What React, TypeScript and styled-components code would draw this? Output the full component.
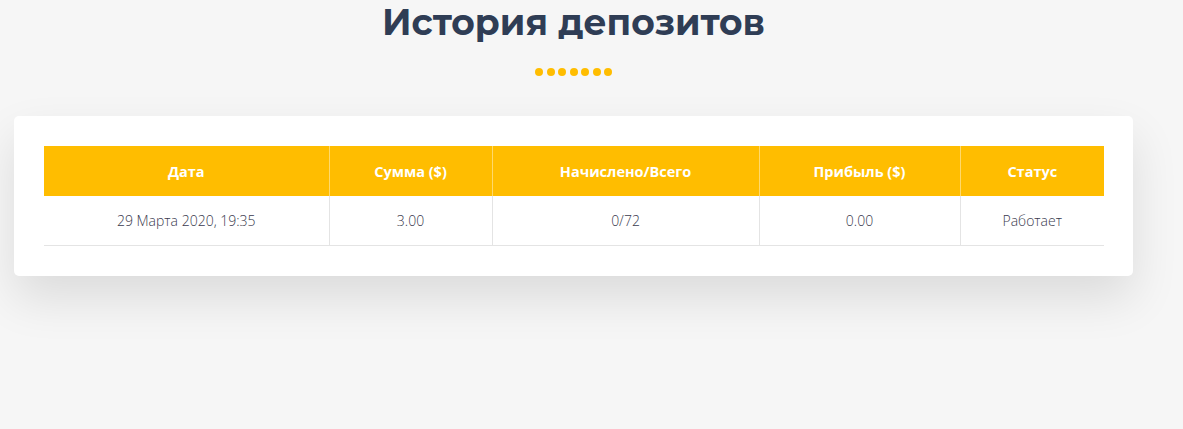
import React from "react";
import styled, { createGlobalStyle } from "styled-components";

const GlobalStyle = createGlobalStyle`
    html, body {
        margin: 0;
        padding: 0;
        background: #f6f6f6;
        font-family: "Open Sans", "Liberation Sans", sans-serif;
    }
`;

const columns = [
    { title: "Дата", width: 285 },
    { title: "Сумма ($)", width: 163 },
    { title: "Начислено/Всего", width: 267 },
    { title: "Прибыль ($)", width: 201 },
    { title: "Статус", width: 144 },
];

const rows = [
    ["29 Марта 2020, 19:35", "3.00", "0/72", "0.00", "Работает"],
];

export default function App() {
    return (
        <>
            <GlobalStyle />
            <Page>
                <Heading>История депозитов</Heading>
                <Dots>
                    {Array.from({ length: 7 }).map((_, i) => <Dot key={i} />)}
                </Dots>
                <Card>
                    <Table>
                        <colgroup>
                            {columns.map(c => <col key={c.title} style={{ width: c.width }} />)}
                        </colgroup>
                        <thead>
                            <tr>
                                {columns.map(c => <Th key={c.title}>{c.title}</Th>)}
                            </tr>
                        </thead>
                        <tbody>
                            {rows.map((r, i) => (
                                <tr key={i}>
                                    {r.map((v, j) => <Td key={j}>{v}</Td>)}
                                </tr>
                            ))}
                        </tbody>
                    </Table>
                </Card>
            </Page>
        </>
    );
}

const Page = styled.div`
    min-height: 429px;
    box-sizing: border-box;
    width: 1119px;
    margin-left: 14px;
    display: flex;
    flex-direction: column;
    align-items: center;
`;

const Heading = styled.h1`
    margin: 0;
    font-family: "Montserrat", "Open Sans", sans-serif;
    font-weight: 700;
    font-size: 36px;
    line-height: 44px;
    color: #2f3d55;
`;

const Dots = styled.div`
    display: flex;
    gap: 3.5px;
    margin-top: 24px;
    height: 8px;
`;

const Dot = styled.span`
    width: 8px;
    height: 8px;
    border-radius: 50%;
    background: #ffbd00;
`;

const Card = styled.div`
    align-self: stretch;
    margin-top: 40px;
    background: #fff;
    border-radius: 5px;
    padding: 30px;
    box-shadow: 0 22px 48px rgba(0, 0, 0, 0.11);
`;

const Table = styled.table`
    width: 1060px;
    border-collapse: collapse;
    table-layout: fixed;
`;

const Th = styled.th`
    background: #ffbd00;
    color: #fff;
    font-family: "Open Sans", sans-serif;
    font-weight: 700;
    font-size: 14.5px;
    height: 50px;
    padding: 0;
    text-align: center;
    border-left: 1px solid #ffd96b;
    &:first-child { border-left: none; }
`;

const Td = styled.td`
    height: 49px;
    padding: 0;
    text-align: center;
    font-family: "Open Sans", sans-serif;
    font-weight: 300;
    font-size: 14px;
    color: #3a3a4e;
    border-bottom: 1px solid #e4e4e4;
    border-left: 1px solid #e4e4e4;
    &:first-child { border-left: none; }
`;
